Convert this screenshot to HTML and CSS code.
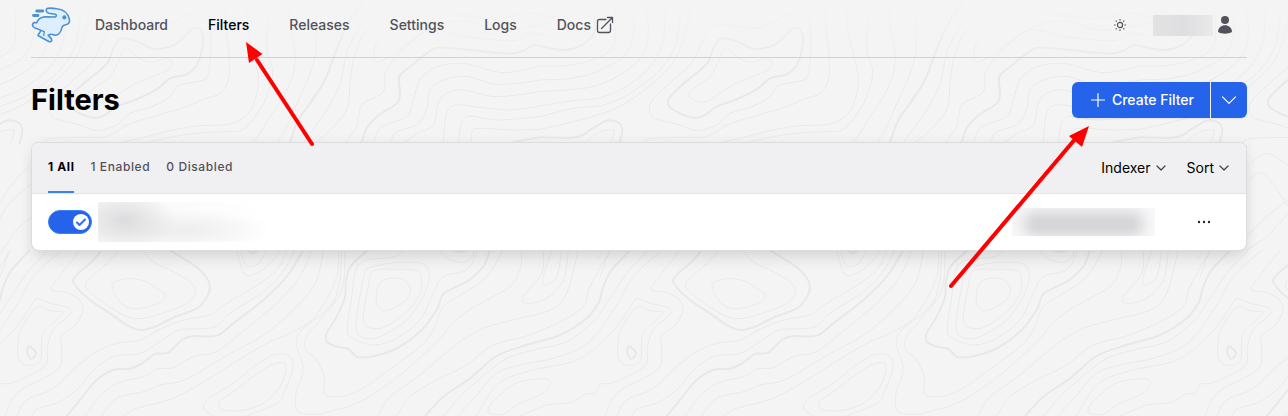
FILE: index.html
```html
<!DOCTYPE html>
<html lang="en">
<head>
<meta charset="utf-8">
<title>Filters</title>
<meta name="viewport" content="width=device-width, initial-scale=1">
<link rel="stylesheet" href="styles.css">
</head>
<body>
<svg class="contours" aria-hidden="true">
  <defs>
    <linearGradient id="fade" x1="0" y1="0" x2="0" y2="80" gradientUnits="userSpaceOnUse">
      <stop offset="0" stop-color="#f4f4f4" stop-opacity="0.9"/>
      <stop offset="1" stop-color="#f4f4f4" stop-opacity="0"/>
    </linearGradient>
    <pattern id="topo" width="600" height="600" patternUnits="userSpaceOnUse">
      <g id="tile"></g>
      <use href="#tile" x="-600"/>
      <use href="#tile" x="600"/>
    </pattern>
  </defs>
  <rect width="100%" height="100%" fill="url(#topo)"/>
  <rect width="100%" height="80" fill="url(#fade)"/>
</svg>

<header class="topbar">
  <a class="logo" href="#" aria-label="Home">
    <svg viewBox="30 18 126 114" fill="#ddeefe" stroke="#4a90d2" stroke-width="5" stroke-linejoin="round" stroke-linecap="round">
      <path d="M80 23C87 21 100 22 112 24C132 26 147 38 151 58C153 69 147 73 140 74C132 75 128 78 127 85C124 99 115 108 105 107C99 107 96 103 92 104L84 107L94 118C98 125 93 129 86 127L52 108C54 100 62 97 60 92C55 87 40 88 36 79C32 72 38 66 43 68L48 68C51 56 61 51 74 49L107 50C112 46 110 42 106 41L86 38C78 36 76 29 80 23Z"/>
      <path d="M60 92L72 96L70 108" fill="none" stroke-width="4"/>
      <circle cx="135" cy="51" r="4" fill="#3b82c4"/>
      <path d="M48 31H67M38 45H52" stroke-width="9"/>
    </svg>
  </a>
  <nav class="nav">
    <a href="#">Dashboard</a>
    <a href="#" class="current" aria-current="page">Filters</a>
    <a href="#">Releases</a>
    <a href="#">Settings</a>
    <a href="#">Logs</a>
    <a href="#">Docs
      <svg class="icon-ext" viewBox="0 0 18 18" fill="none" stroke="currentColor" stroke-width="1.3" stroke-linecap="round" stroke-linejoin="round"><path d="M10 3.5H3.5Q1.5 3.5 1.5 5.500V14.500Q1.500 16.500 3.500 16.500H12.500Q14.500 16.500 14.500 14.500V8M5.500 12.500L16.500 1.500M11.500 1.500H16.500V6.500"/></svg>
    </a>
  </nav>
  <div class="account">
    <button class="plain" aria-label="Toggle theme">
      <svg width="14" height="14" viewBox="0 0 14 14" fill="none" stroke="#52525b" stroke-width="1.2"><circle cx="7" cy="7" r="2.600"/><path d="M7 1V2.500M7 11.500V13M1 7H2.500M11.500 7H13M2.700 2.700L3.700 3.700M10.300 10.300L11.300 11.300M2.700 11.300L3.700 10.300M10.300 3.700L11.300 2.700"/></svg>
    </button>
    <button class="plain user" aria-label="User menu">
      <span class="user-name"></span>
      <svg width="16" height="20" viewBox="0 0 16 20" fill="#52525b"><circle cx="8" cy="5" r="4"/><path d="M1 17C1 8 15 8 15 17C11 19.300 5 19.300 1 17Z"/></svg>
    </button>
  </div>
</header>

<main class="main">
  <div class="heading">
    <h1>Filters</h1>
    <div class="split">
      <button class="create">
        <svg width="16" height="16" viewBox="0 0 16 16" stroke="#fff" stroke-width="1.200" stroke-linecap="round"><path d="M8 1.500V14.500M1.500 8H14.500"/></svg>
        Create Filter
      </button>
      <button class="more" aria-label="More create options">
        <svg width="16" height="16" viewBox="0 0 16 16" fill="none" stroke="#fff" stroke-width="1.200" stroke-linecap="round" stroke-linejoin="round"><path d="M1.500 4.800L8 11.300L14.500 4.800"/></svg>
      </button>
    </div>
  </div>

  <section class="card">
    <div class="card-head">
      <div class="tabs">
        <button class="tab active">1 All</button>
        <button class="tab">1 Enabled</button>
        <button class="tab">0 Disabled</button>
      </div>
      <div class="menus">
        <button class="menu">Indexer
          <svg width="10" height="10" viewBox="0 0 10 10" fill="none" stroke="#3f3f46" stroke-width="1.200" stroke-linecap="round" stroke-linejoin="round"><path d="M1 3L5 7L9 3"/></svg>
        </button>
        <button class="menu">Sort
          <svg width="10" height="10" viewBox="0 0 10 10" fill="none" stroke="#3f3f46" stroke-width="1.200" stroke-linecap="round" stroke-linejoin="round"><path d="M1 3L5 7L9 3"/></svg>
        </button>
      </div>
    </div>
    <div class="row">
      <label class="switch">
        <input type="checkbox" role="switch" aria-label="Enabled" checked>
        <span class="knob"><svg width="12" height="12" viewBox="0 0 12 12" fill="none" stroke="#2f6fed" stroke-width="2" stroke-linecap="round" stroke-linejoin="round"><path d="M2 6.500L4.500 9L10 3.500"/></svg></span>
      </label>
      <div class="hidden-name"></div>
      <div class="hidden-indexer"><span></span></div>
      <button class="plain dots" aria-label="Filter actions">
        <svg width="14" height="4" viewBox="0 0 14 4" fill="#27272a"><circle cx="2" cy="2" r="1.200"/><circle cx="7" cy="2" r="1.200"/><circle cx="12" cy="2" r="1.200"/></svg>
      </button>
    </div>
  </section>
</main>

<svg class="arrow arrow-nav" viewBox="0 0 72 108" aria-hidden="true"><path d="M70 104L15 20" stroke="#f00" stroke-width="4" stroke-linecap="round"/><path d="M4 2L20.500 14L7 23Z" fill="#f00"/></svg>
<svg class="arrow arrow-create" viewBox="0 0 144 166" aria-hidden="true"><path d="M4 162L129 14" stroke="#f00" stroke-width="4" stroke-linecap="round"/><path d="M142 2L122 12L135 23Z" fill="#f00"/></svg>

<script src="contours.js"></script>
</body>
</html>
```

FILE: styles.css
```css
* { box-sizing: border-box; }
body {
  margin: 0;
  min-height: 100vh;
  position: relative;
  isolation: isolate;
  background: #f4f4f4;
  color: #000;
  font-family: Inter, "Liberation Sans", sans-serif;
  font-size: 14px;
  line-height: 20px;
}
button { font: inherit; color: inherit; border: 0; background: none; padding: 0; cursor: pointer; }
svg { display: block; }
.contours { position: absolute; inset: 0; width: 100%; height: 100%; z-index: -1; }
.contours .line { fill: none; stroke: #e9e9ea; stroke-width: 1; }
.contours .heavy { fill: none; stroke: #e8e8e8; stroke-width: 2; }

.topbar {
  display: flex;
  align-items: center;
  height: 58px;
  margin: 0 41px 0 31px;
  padding-bottom: 7px;
  border-bottom: 1px solid #d1d1d4;
}
.logo svg { width: 40px; height: 38px; }
.nav { display: flex; gap: 40px; margin-left: 24px; font-weight: 500; color: #52525b; }
.nav a { display: flex; align-items: center; gap: 5px; color: inherit; text-decoration: none; }
.nav .current { color: #000; }
.icon-ext { width: 18px; height: 18px; }
.account { display: flex; align-items: center; gap: 26px; margin-left: auto; padding-right: 14px; }
.user { display: flex; align-items: center; gap: 4px; }
.user-name { width: 60px; height: 21px; background: linear-gradient(90deg, #e4e2e3, #dedee1 50%, #eaeaeb); }

.main { padding: 24px 41px 24px 31px; }
.heading { display: flex; align-items: center; justify-content: space-between; height: 36px; }
h1 { margin: 0; font-size: 29px; line-height: 36px; font-weight: 700; }
.split { display: flex; height: 36px; color: #fff; box-shadow: 0 1px 2px #0001; border-radius: 6px; }
.create { display: flex; align-items: center; gap: 6px; padding: 0 16px 0 18px; border-radius: 6px 0 0 6px; background: #2563eb; font-weight: 500; }
.more { padding: 0 10px; margin-left: 1px; background: #2563eb; border-radius: 0 6px 6px 0; }

.card { margin-top: 24px; border: 1px solid #dcdce0; border-radius: 8px; background: #fff; box-shadow: 0 10px 15px -3px #0000001a, 0 0 12px #0000000d; }
.card-head { display: flex; justify-content: space-between; height: 51px; padding: 0 17px 0 16px; border-bottom: 1px solid #e4e4e7; border-radius: 8px 8px 0 0; background: #f0f0f2; }
.tabs { display: flex; gap: 16px; }
.tab { font-size: 12px; font-weight: 500; letter-spacing: 0.05em; color: #52525b; border-bottom: 2px solid transparent; }
.tab.active { color: #000; font-weight: 700; border-color: #3b82f6; }
.menus { display: flex; gap: 21px; }
.menu { display: flex; align-items: center; gap: 5px; }

.row { display: flex; align-items: center; height: 56px; padding: 0 35px 0 16px; }
.switch { display: flex; position: relative; }
.switch input { appearance: none; margin: 0; width: 44px; height: 24px; border: 1px solid #3b82f6; border-radius: 12px; background: #2563eb; }
.knob { position: absolute; right: 3px; top: 4px; width: 16px; height: 16px; display: grid; place-items: center; border-radius: 50%; background: #fff; pointer-events: none; }
.hidden-name { width: 168px; height: 40px; margin-left: 6px; background: radial-gradient(ellipse 52px 30px at 26px 18px, #dcdcde, transparent), radial-gradient(ellipse 90px 20px at 84px 28px, #ededee, transparent), linear-gradient(90deg, #f7f7f7, #fff); }
.hidden-indexer { width: 143px; height: 28px; margin-left: auto; padding: 4px 12px 0; background: #f8f8f9; overflow: hidden; }
.hidden-indexer span { display: block; height: 24px; border-radius: 8px; background: #d2d2d5; filter: blur(7px); }
.dots { margin-left: 42px; }

.arrow { position: absolute; pointer-events: none; }
.arrow-nav { left: 242px; top: 40px; width: 72px; height: 108px; }
.arrow-create { left: 947px; top: 124px; width: 144px; height: 166px; }
```

FILE: contours.js
```javascript
// Each sheet holds hand-plotted contour points at three units per pixel.
// A leading "h" marks a heavy contour, a leading "z" a closed one.
const sheets = [
  { x: -60, y: 0, lines: [
    "hz 555,115 600,128 640,146 690,140 720,122 760,85 785,95 788,135 770,195 740,223 690,235 650,268 580,302 530,320 480,352 430,345 385,315 395,285 440,243 500,192 520,145 535,120",
    "z 560,145 590,170 630,187 680,176 697,190 680,212 600,245 545,275 510,300 480,306 445,285 465,262 510,230 535,185 550,150",
    "z 800,40 812,90 812,160 805,220 790,240 715,258 690,290 640,318 570,340 530,375 470,392 420,375 345,355 328,325 345,290 400,240 450,195 480,140 505,90 530,72 600,80 650,85 700,65 740,45 780,33",
    "855,0 860,100 868,180 865,240 840,280 790,298 740,320 640,350 560,375 500,410 420,412 330,416 305,428",
    "920,0 925,100 945,180 955,240 945,300 920,345 870,372 770,378 700,390 620,410 540,428",
    "h 0,138 70,150 120,138 155,110 165,90 165,50",
    "0,198 60,198 130,188 200,160 225,120 225,0",
    "0,240 90,235 170,215 250,170 280,110 280,60 270,0",
    "0,275 130,265 200,245 270,205 315,150 325,80 315,0",
    "0,318 90,303 170,295 250,265 330,200 370,120 375,0",
    "0,350 100,325 190,315 270,280 350,220 400,150 420,60 415,0",
    "0,388 120,360 220,328 300,280 390,200 430,120 455,0",
    "h 0,412 110,412 150,390 200,362 235,368 247,390 238,432",
    "140,425 180,395 222,393 210,430",
    "500,0 560,25 620,38 680,22 720,0"
  ]},
  { x: 230, y: 0, lines: [
    "122,0 110,140 128,215 110,290 75,350 40,388 0,395 -80,398 -170,410 -270,432",
    "180,0 180,80 195,150 190,220 160,290 120,350 90,400 65,430",
    "270,0 258,60 258,150 240,220 205,300 170,380 140,428",
    "h 400,0 350,80 315,160 285,240 240,310 205,360 180,428",
    "440,20 385,90 350,160 330,250 290,330 220,428",
    "470,40 410,90 375,160 360,250 350,330 290,400 250,430",
    "960,65 900,80 800,90 720,65 640,70 560,110 500,155 455,182 430,180 440,130 480,85 530,50",
    "960,110 900,100 850,122 720,112 600,90 540,130 490,180 465,220 460,275 400,310 385,350 380,380 345,428",
    "h 395,428 410,385 440,350 500,310 510,280 508,230 540,200 590,160 625,143 720,150 850,160 910,136 930,138",
    "430,428 455,380 530,350 550,300 570,240 620,200 700,190 760,205 830,218 930,198",
    "480,428 500,395 560,375 590,330 600,270 640,240 710,229 790,252 860,250 930,240",
    "525,428 560,400 610,375 625,310 650,280 700,270 800,290 930,275",
    "640,428 650,340 680,315 750,322 840,330 930,318",
    "685,428 695,370 720,348 800,360 930,350",
    "725,428 725,400 745,385 850,390 930,388",
    "h 830,432 870,422 930,412",
    "550,0 535,45 600,35 700,45 800,55 900,40 980,50 1040,0"
  ]},
  { x: 0, y: 250, lines: [
    "h 330,-30 280,30 225,80 225,105 270,150 330,190 385,228 425,240 470,228 520,203 590,175 622,140 628,100 600,60 550,25 510,0 480,-30",
    "380,-20 310,50 257,105 300,150 370,195 420,206 480,192 560,160 587,125 570,95 520,65 460,35 420,-10",
    "z 345,95 385,86 430,92 465,112 496,135 475,160 410,176 370,165 345,135 336,110",
    "710,0 725,55 740,77 780,65 820,30 840,0",
    "720,0 740,48 775,40 800,0",
    "h 745,0 757,10 775,0",
    "30,0 0,80",
    "h 90,0 35,60 10,110 0,150",
    "145,0 80,70 40,130 0,190",
    "185,0 100,80 60,150 0,240",
    "0,280 50,230 85,180 105,150 120,147 150,160 205,172 208,195 160,240 142,290 140,340 110,365 70,385 40,398 0,402",
    "240,0 170,90 155,120 200,128 240,150 248,185 225,225 185,260 185,300 180,350 130,385 70,415 35,450 15,498",
    "z 120,170 150,182 188,186 175,205 130,245 125,290 122,330 100,345 65,340 53,310 58,250 75,215 100,180",
    "hz 90,290 108,310 95,326 83,312 83,293",
    "50,498 80,450 160,415 230,350 290,305 350,280 420,270 480,238 550,210 630,195 680,160 780,100 830,60 862,0",
    "95,498 115,475 180,455 240,410 280,360 340,320 420,310 480,275 540,240 640,232 690,190 790,125 845,70 885,0",
    "h 200,498 240,450 290,390 340,360 390,356 430,338 465,312 505,308 545,270 580,258 650,257 700,220 790,150 860,80 910,0",
    "255,498 300,440 350,400 430,380 470,357 520,353 580,320 650,305 720,250 820,170 900,80 935,0",
    "305,498 350,445 430,425 480,405 540,395 600,365 700,305 800,250 900,160 950,90 970,0",
    "370,498 410,475 520,445 620,390 700,340 800,280 900,235 960,180 1010,80 1015,0",
    "z 855,340 852,385 825,430 780,465 720,482 665,478 658,455 700,425 760,380 815,345",
    "640,498 612,475 625,445 700,400 760,350 830,312 875,325 875,370 850,430 830,460 740,498",
    "1025,0 1018,100 990,170 910,235 888,280 905,330 908,370 888,430 890,480 915,492 960,492",
    "-10,-120 30,-190 95,-260 150,-320",
    "-10,-60 20,-130 95,-200",
    "-10,30 50,-60 95,-100",
    "140,-250 200,-290 270,-250",
    "140,-200 190,-230 265,-130",
    "140,-40 200,-100 264,-150",
    "140,0 200,-40 264,-110"
  ]},
  { x: 320, y: 250, lines: [
    "75,0 65,120 0,210 -40,260 -42,300 -10,330 12,380 14,430 50,440 110,425 200,365 300,290 340,240 370,170 430,130 500,80 550,0",
    "h 145,0 95,45 78,90 75,140 50,200 20,250 20,275 50,290 85,297 110,320 150,320 220,300 300,245 350,180 372,130 440,95 490,50 510,0",
    "z 190,90 235,85 268,105 265,140 230,170 190,182 170,160 172,115",
    "z 160,63 230,58 290,62 304,85 300,130 260,185 200,228 160,236 132,220 132,180 145,110",
    "z 150,52 230,38 310,42 328,80 310,140 260,210 200,250 150,267 112,250 110,200 125,110 135,65",
    "250,0 220,22 140,30 108,60 95,140 82,240 100,265 160,285 230,265 300,210 340,130 370,80 440,60 475,0",
    "360,0 380,25 430,37 458,20 460,0",
    "h 400,0 420,6 440,0",
    "0,492 120,455 240,375 340,285 420,200 500,150 570,110 600,60 605,0",
    "670,0 665,70 610,140 620,160 680,145 730,90 745,0",
    "695,0 670,80 675,105 710,80 725,0",
    "175,498 210,440 300,375 400,290 490,235 600,205 690,180 740,130 775,0",
    "230,498 270,440 350,390 440,345 520,285 620,258 720,215 790,170 810,110 870,0",
    "h 315,498 370,440 450,385 530,318 620,285 720,255 800,205 835,160 840,150",
    "370,498 430,430 500,370 560,325 640,300 740,275 820,215 840,190",
    "415,498 470,435 530,370 600,345 700,325 790,290 840,240",
    "470,498 510,430 550,390 640,360 740,340 800,315 840,280",
    "z 600,395 680,388 688,412 660,435 600,460 550,492 510,490 508,470 545,430",
    "600,498 680,465 750,458 800,432 825,430 840,402"
  ]}
];

function smooth(points, closed) {
  const n = points.length;
  const at = i => closed ? points[(i + n) % n] : points[Math.max(0, Math.min(n - 1, i))];
  let d = "M" + points[0];
  for (let i = 0; i < (closed ? n : n - 1); i++) {
    const [a, b, c, e] = [at(i - 1), at(i), at(i + 1), at(i + 2)];
    d += "C" + [b[0] + (c[0] - a[0]) / 6, b[1] + (c[1] - a[1]) / 6,
                c[0] - (e[0] - b[0]) / 6, c[1] - (e[1] - b[1]) / 6, c[0], c[1]];
  }
  return d;
}

const tile = document.getElementById("tile");
for (const sheet of sheets) {
  for (const line of sheet.lines) {
    const flags = (line.match(/^[hz]+/) || [""])[0];
    const points = line.slice(flags.length).trim().split(" ").map(pair => {
      const [x, y] = pair.split(",").map(Number);
      return [x / 3 + sheet.x, y / 3 + sheet.y];
    });
    const path = document.createElementNS("http://www.w3.org/2000/svg", "path");
    path.setAttribute("class", flags.includes("h") ? "heavy" : "line");
    path.setAttribute("d", smooth(points, flags.includes("z")));
    tile.appendChild(path);
  }
}
```
